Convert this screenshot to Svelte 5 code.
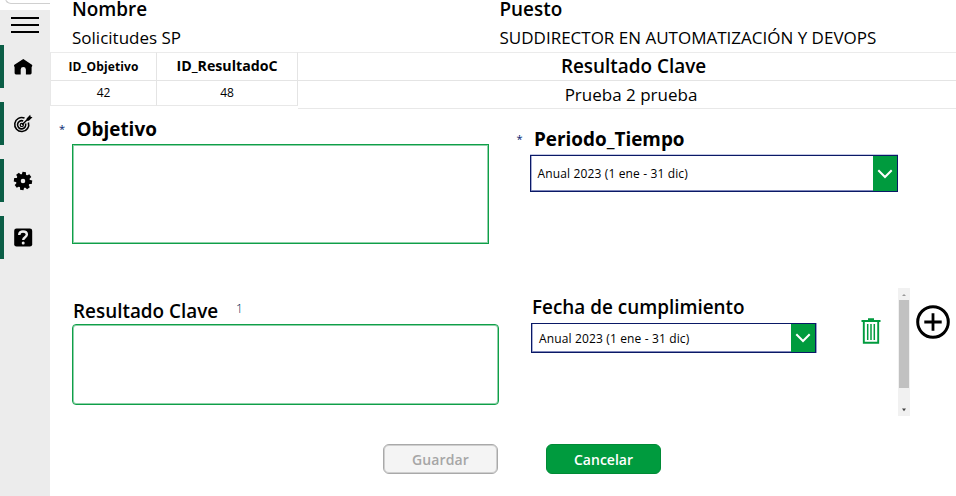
<script>
  const periods = ['Anual 2023 (1 ene - 31 dic)'];
  let objetivo = $state('');
  let resultado = $state('');
</script>

{#snippet chevron()}
  <svg class="chevron" width="16" height="10" viewBox="0 0 16 10"><path d="M1.3 1.3 8 8 14.7 1.3" fill="none" stroke="#fff" stroke-width="2" /></svg>
{/snippet}

<div class="app">
  <aside>
    <div class="top"><i></i></div>
    <button class="burger" aria-label="Menu"><span></span><span></span><span></span></button>
    <nav>
      <a href="#inicio" aria-label="Inicio">
        <svg width="20" height="20" viewBox="0 0 20 20"><path d="M10.3 2 1.4 7.8a1 1 0 0 0-.3 1.2L1.6 10.3V16a1.4 1.4 0 0 0 1.4 1.4h4.7v-5A2.6 2.6 0 0 1 10.3 10a2.6 2.6 0 0 1 2.6 2.4v5H17.2A1.4 1.4 0 0 0 18.6 16v-5.7l.6-1.3a1 1 0 0 0-.3-1.2Z" /></svg>
      </a>
      <a href="#objetivos" aria-label="Objetivos">
        <svg width="20" height="20" viewBox="0 0 20 20" fill="none" stroke="#000"><path d="M11.5 4.1A7 7 0 1 0 15.4 8.4M10.2 7A4.1 4.1 0 1 0 12.5 9.4" stroke-width="1.6" /><circle cx="8.8" cy="10.9" r="1.6" stroke-width="1.2" /><path d="m9 10.7 7-6.7" stroke-width="1.5" /><path d="m13.6 4.4 3.6-3.6.4 2 1.9.4-3.6 3.5-2.1.1Z" fill="#000" stroke="none" /></svg>
      </a>
      <a href="#ajustes" aria-label="Ajustes">
        <svg width="20" height="20" viewBox="-10 -10 20 20"><g>{#each [8, 53, 98, 143, 188, 233, 278, 323] as angle}<path d="M-2.3-5-1.7-9.1H1.7L2.3-5Z" transform="rotate({angle})" />{/each}<path fill-rule="evenodd" d="M0-7A7 7 0 1 1 0 7 7 7 0 1 1 0-7M0-2.3A2.3 2.3 0 1 0 0 2.3 2.3 2.3 0 1 0 0-2.3" /></g></svg>
      </a>
      <a href="#ayuda" aria-label="Ayuda">
        <svg width="20" height="20" viewBox="0 0 20 20"><rect x="1.2" y=".5" width="18" height="18" rx="2.3" /><path d="M6.2 6.9C6.2 4.4 7.8 3.5 10 3.5s3.9 1.1 3.9 3.1c0 2.6-3.7 2.7-3.7 5.4" fill="none" stroke="#ececec" stroke-width="2.4" /><circle cx="10.2" cy="15" r="1.5" fill="#ececec" /></svg>
      </a>
    </nav>
  </aside>

  <main>
    <header>
      <div class="person"><b>Nombre</b><span>Solicitudes SP</span></div>
      <div class="person"><b>Puesto</b><span>SUDDIRECTOR EN AUTOMATIZACIÓN Y DEVOPS</span></div>
    </header>

    <section class="table">
      <div class="col c1"><div class="th"><span>ID_Objetivo</span></div><div class="td"><span>42</span></div></div>
      <div class="col c2"><div class="th"><span>ID_ResultadoC</span></div><div class="td"><span>48</span></div></div>
      <div class="col c3"><div class="th"><span>Resultado Clave</span></div><div class="td"><span>Prueba 2 prueba</span></div></div>
    </section>

    <section class="goal">
      <div class="field">
        <div class="label"><i>*</i><h2>Objetivo</h2></div>
        <textarea aria-label="Objetivo" bind:value={objetivo}></textarea>
      </div>
      <div class="field period">
        <div class="label"><i>*</i><h2>Periodo_Tiempo</h2></div>
        <button class="select"><span>{periods[0]}</span><em>{@render chevron()}</em></button>
      </div>
    </section>

    <section class="result">
      <div class="key">
        <div class="label"><h3>Resultado Clave</h3><small>1</small></div>
        <textarea aria-label="Resultado Clave" bind:value={resultado}></textarea>
      </div>
      <div class="date">
        <h3>Fecha de cumplimiento</h3>
        <button class="select small"><span>{periods[0]}</span><em>{@render chevron()}</em></button>
      </div>
      <button class="trash" aria-label="Eliminar">
        <svg width="20" height="27" viewBox="0 0 20 27" fill="none" stroke="#009b3e"><path d="M.5 3h19M7 1.2h6" stroke-width="1.8" /><path d="M2.8 3v21.8h14.4V3" stroke-width="1.9" /><path d="M6.7 6v16M10 6v16M13.3 6v16" stroke-width="1.5" /></svg>
      </button>
      <div class="scroll"><svg width="12" height="12"><path d="M4 8h4L6 6Z" fill="#999" /></svg><div class="thumb"></div><svg width="12" height="12"><path d="M4 4.5h4L6 7.3Z" fill="#444" /></svg></div>
      <button class="add" aria-label="Agregar">
        <svg width="34" height="34" viewBox="0 0 34 34" fill="none" stroke="#000"><circle cx="17" cy="17" r="15.3" stroke-width="3" /><path d="M8.3 17h17.4M17 8.3v17.4" stroke-width="2.8" /></svg>
      </button>
    </section>

    <footer>
      <button class="btn off"><span>Guardar</span></button>
      <button class="btn go"><span>Cancelar</span></button>
    </footer>
  </main>
</div>

<style>
  :global(body) { margin: 0; background: #fff; overflow: hidden; }
  .app, .app * { box-sizing: border-box; }
  .app { display: flex; width: 956px; height: 496px; overflow: hidden; font-family: 'Open Sans', 'Noto Sans', sans-serif; color: #000; }
  button, textarea { font: inherit; color: inherit; margin: 0; padding: 0; border: 0; background: none; display: block; }
  h2, h3 { margin: 0; white-space: nowrap; }
  span { white-space: nowrap; }
  svg { display: block; }

  aside { width: 50px; background: #ececec; flex: none; }
  .top { height: 10px; background: #fff; overflow: hidden; display: flex; align-items: flex-end; padding: 0 0 6px 5px; }
  .top i { flex: 1; height: 14px; border: 1px solid #d0d0d0; border-right: 0; border-radius: 0 0 0 6px; flex-shrink: 0; }
  .burger { width: 28px; margin: 7px 0 0 11px; display: flex; flex-direction: column; gap: 5px; }
  .burger span { height: 2px; background: #000; }
  nav { display: flex; flex-direction: column; gap: 14px; margin-top: 12px; }
  nav a { height: 43px; border-left: 4px solid #0b5e46; padding: 12px 0 0 9px; }

  main { flex: 1; min-width: 0; display: flex; flex-direction: column; }
  header { display: flex; height: 52px; }
  .person { display: flex; flex-direction: column; width: 427.5px; flex: none; }
  .person:first-child { margin-left: 22px; }
  .person b { font-size: 18.9px; font-weight: 600; line-height: 18px; }
  .person span { font-size: 17px; line-height: 30px; margin-top: 5px; }

  .table { display: flex; height: 57px; align-items: flex-start; }
  .col { border-top: 1px solid #ebebeb; border-bottom: 1px solid #e8e8e8; text-align: center; }
  .c1 { width: 107px; height: 54px; border-left: 1px solid #e8e8e8; border-right: 1px solid #e4e4e4; }
  .c2 { width: 141px; height: 54px; border-right: 1px solid #e4e4e4; }
  .c3 { flex: 1; height: 57px; }
  .c3 .th { padding-left: 13px; }
  .c3 .td { padding-left: 8px; }
  .th { height: 28px; line-height: 27px; border-bottom: 1px solid #e4e4e4; font-weight: 700; }
  .td { line-height: 24px; font-size: 12px; }
  .c1 .th { font-size: 12px; letter-spacing: .12px; }
  .c2 .th { font-size: 14.2px; line-height: 26px; }
  .c3 .th { font-size: 18.9px; font-weight: 600; line-height: 27px; }
  .c3 .td { font-size: 17px; line-height: 28px; }

  .goal { display: flex; height: 179px; padding-left: 8px; }
  .field { width: 457.5px; padding-top: 8px; flex: none; }
  .label { display: flex; }
  .label i { font-style: normal; font-size: 11px; width: 17.5px; margin-left: 1px; color: #001a6e; line-height: 24px; }
  h2 { font-size: 18.9px; font-weight: 700; line-height: 24px; }
  textarea { resize: none; outline: 0; border: 1px solid #0f9f48; box-shadow: inset 0 0 0 1px #8fd1a9; }
  .goal textarea { width: 417px; height: 100px; margin: 3px 0 0 14px; }
  .period { padding-top: 18px; }
  .select { display: flex; width: 368px; height: 37px; margin: 4px 0 0 14px; border: 1px solid #0a1966; text-align: left; font-size: 12px; letter-spacing: .14px; line-height: 35px; padding-left: 7px; justify-content: space-between; box-shadow: inset 0 -1px #8088bb, inset 1px 0 #a8aed4, 0 -1px #c3c8e2; }
  .select em { width: 24px; background: #009b3e; display: flex; align-items: center; justify-content: center; }

  .result { display: flex; height: 156px; padding-left: 22px; }
  .key { width: 459px; padding-top: 10px; }
  .key h3 { width: 164px; }
  h3 { font-size: 18.9px; font-weight: 600; line-height: 26px; padding-left: 1px; }
  small { font-size: 12px; font-weight: 300; line-height: 22px; color: #001a4e; }
  .key textarea { width: 427px; height: 81px; border-radius: 4px; }
  .date { width: 330px; padding-top: 6px; }
  .select.small { width: 285px; height: 30px; margin: 3px 0 0; line-height: 29px; box-shadow: inset 0 -1px #8088bb, inset 1px 0 #a8aed4, 1px 0 #9aa1cb; }
  .trash { width: 37px; height: 27px; margin-top: 30px; }
  .scroll { width: 12px; height: 128px; background: #f1f1f1; }
  .thumb { width: 10px; height: 88px; margin-left: 1px; background: #c1c1c1; }
  .scroll svg:last-child { margin-top: 16px; }
  .add { margin: 17px 0 0 6px; width: 34px; height: 34px; flex: none; }

  footer { display: flex; gap: 48px; padding-left: 333px; }
  .btn { width: 115px; height: 30px; border-radius: 6px; font-size: 14px; font-weight: 600; line-height: 27px; text-align: center; }
  .off { background: #f4f4f4; border: 1px solid #a9a9a9; box-shadow: inset 0 0 0 1px #cfcfcf; color: #a6a6a6; letter-spacing: .15px; }
  .go { background: #009b3e; border: 1px solid #008a36; color: #fff; }
</style>
